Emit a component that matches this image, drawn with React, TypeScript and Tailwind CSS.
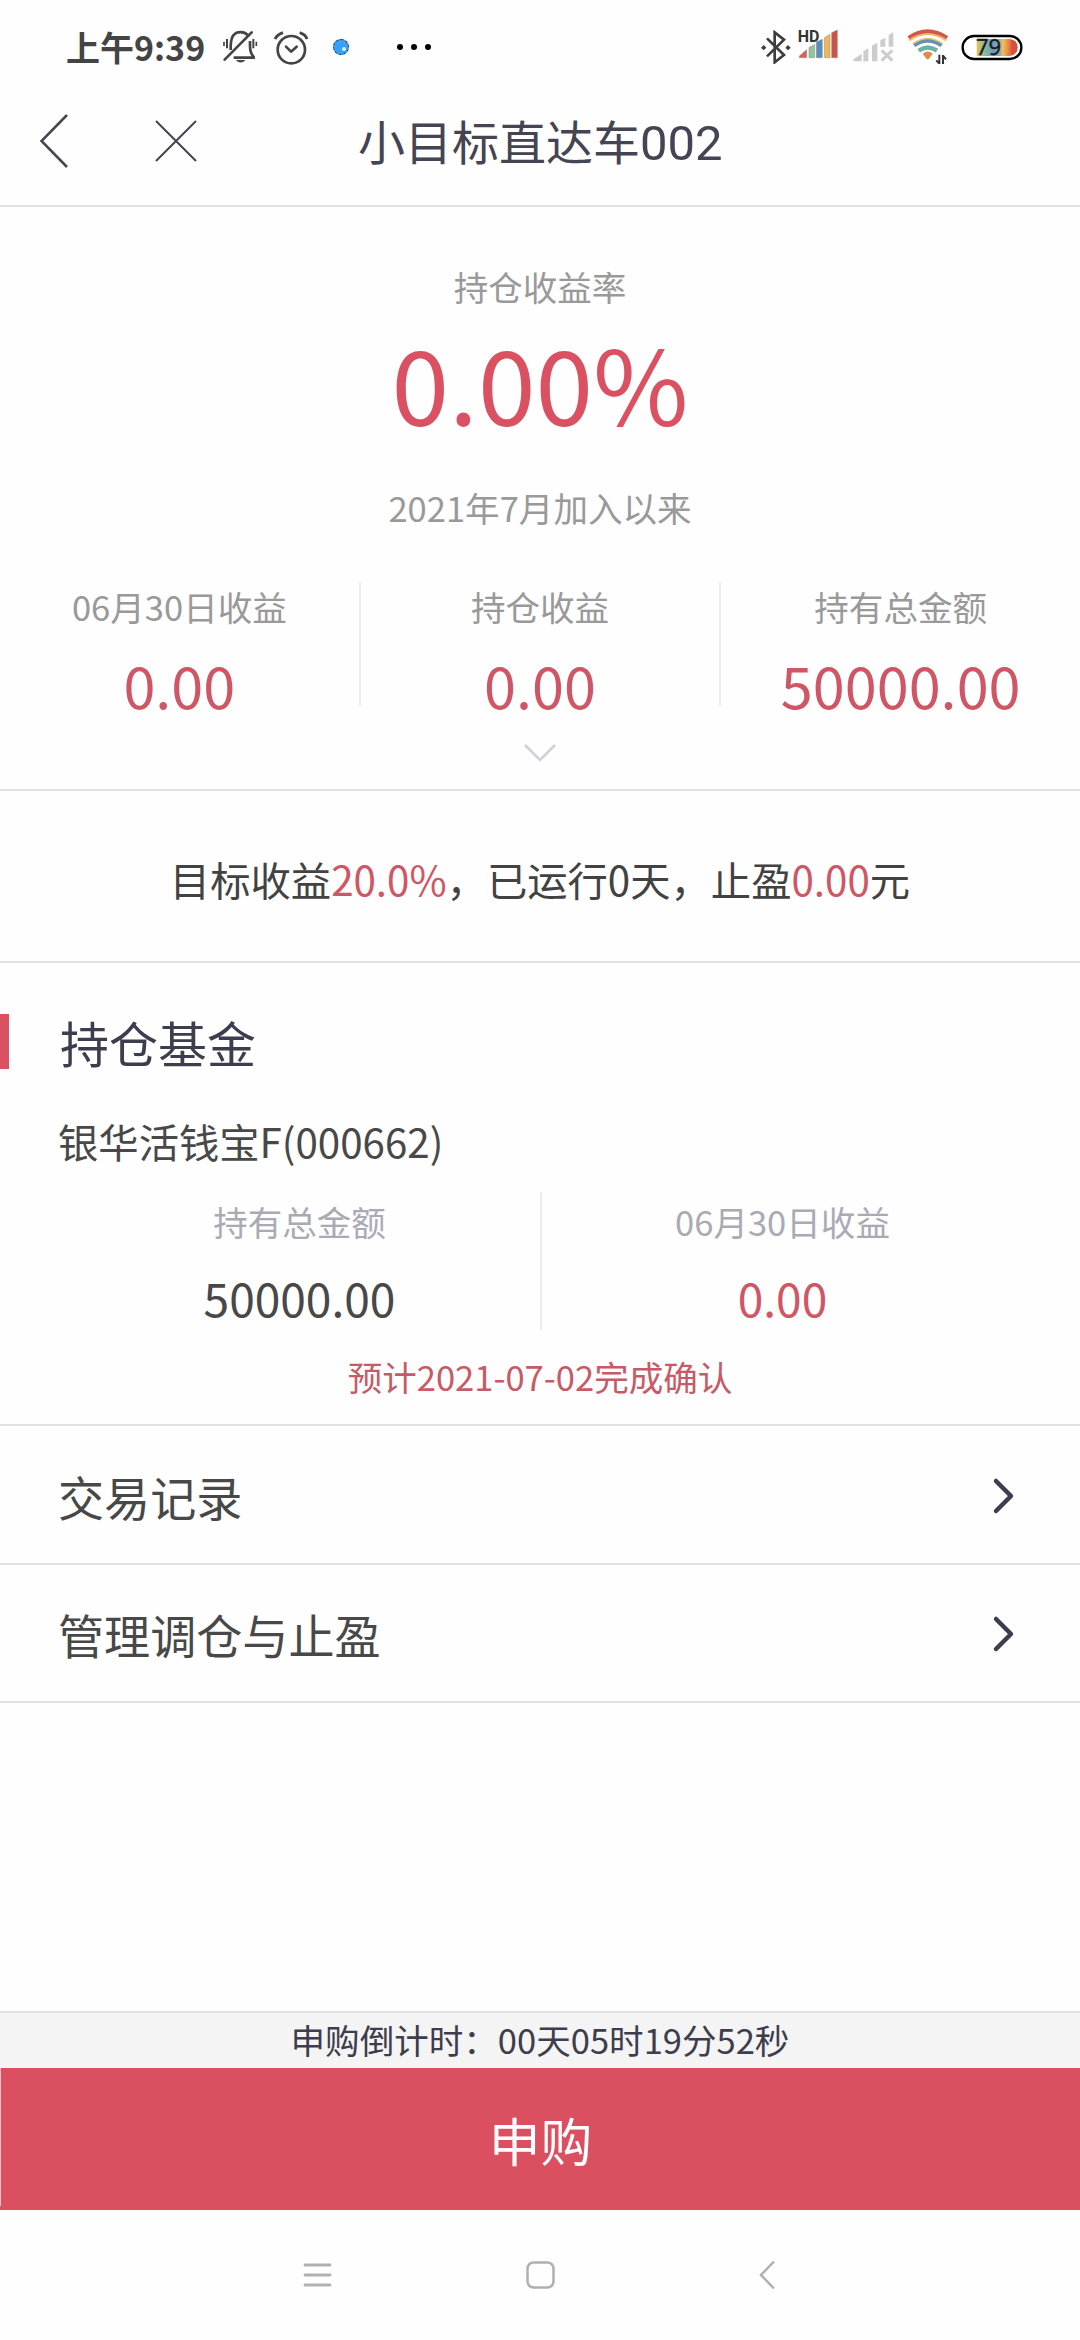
import type { ReactNode } from "react";
import { clsx } from "clsx";

type Stat = { label: string; value: string };

const stats: Stat[] = [
  { label: "06月30日收益", value: "0.00" },
  { label: "持仓收益", value: "0.00" },
  { label: "持有总金额", value: "50000.00" },
];

const links = ["交易记录", "管理调仓与止盈"];

function BellOff() {
  return (
    <svg className="h-[34px] w-[35px]" viewBox="548 60 105 102" fill="none" stroke="#444" strokeWidth="8">
      <path d="M622 75C612 64 590 63 580 75C572 84 572 92 571 108V120" />
      <path d="M629 93V108C629 124 632 132 640 141V143H580" />
      <path d="M634 67L553 149" strokeLinecap="round" />
      <path d="M587 150H615C610 160 592 160 587 150Z" fill="#444" stroke="none" />
      <path d="M560 87V115M639 87V115" strokeWidth="6" />
      <path d="M551 95V108M648 95V108" strokeWidth="5" />
    </svg>
  );
}

function Alarm() {
  return (
    <svg className="h-[35px] w-[36px]" viewBox="698 58 108 105" fill="none" stroke="#444" strokeWidth="8">
      <circle cx="753" cy="117" r="41" />
      <path d="M737 108L752 123L769 108" strokeLinecap="round" strokeLinejoin="round" />
      <path d="M704 85Q711 71 728 66M778 66Q795 71 800 85" strokeWidth="9" />
    </svg>
  );
}

function Bluetooth() {
  return (
    <svg className="h-[34px] w-[30px]" viewBox="64 59 90 102" fill="none" stroke="#3d3d3d" strokeWidth="8">
      <path d="M82 84L133 134L105 156V66L133 88L82 138" />
      <path d="M72 104L80 112L72 120L64 112ZM145 104L153 112L145 120L137 112Z" fill="#3d3d3d" stroke="none" />
    </svg>
  );
}

function HdSignal() {
  return (
    <svg className="h-[35px] w-[42px]" viewBox="171 42 126 105">
      <g stroke="#8a8a8a" strokeWidth="1.5">
        <path d="M178 143V138L200 119V143Z" fill="#d9644b" />
        <path d="M207 143V112L224 104V143Z" fill="#8fc79a" />
        <path d="M229 143V96L247 88V143Z" fill="#5b8dbb" />
        <path d="M253 143V83L270 73V143Z" fill="#f0b757" />
        <path d="M275 143V68L292 60V143Z" fill="#cf5245" />
      </g>
      <text x="173" y="97" fontSize="48" fontWeight="700" fill="#333" fontFamily="Roboto, sans-serif">
        HD
      </text>
    </svg>
  );
}

function NoSignal() {
  return (
    <svg className="h-[30px] w-[41px]" viewBox="341 65 123 90" fill="#ccc">
      <path d="M342 153V147L367 130V153Z" />
      <path d="M372 153V123L387 114V153Z" />
      <path d="M398 153V106L414 97V153Z" />
      <path d="M423 109V90L438 82V109Z" />
      <path d="M448 109V74L462 66V109Z" />
      <path d="M427 120L459 151M459 120L427 151" stroke="#ccc" strokeWidth="9" />
    </svg>
  );
}

function Wifi() {
  return (
    <svg className="h-[36px] w-[42px]" viewBox="504 58 126 108" fill="none">
      <path d="M509 85Q566 46 624 85" stroke="#cf5a49" strokeWidth="13" />
      <path d="M511 92Q566 54 622 92" stroke="#efb866" strokeWidth="6" />
      <path d="M525 107Q566 79 608 107" stroke="#668fb5" strokeWidth="12" />
      <path d="M523 101Q566 72 610 101" stroke="#efc873" strokeWidth="5" />
      <path d="M539 123Q566 104 594 123" stroke="#6fb0a8" strokeWidth="13" />
      <path d="M551 132Q566 119 581 132L570 147Q566 150 562 147Z" fill="#e08a4e" />
      <path d="M601 135V163M592 152L601 162M612 163V136M612 138L621 149" stroke="#333" strokeWidth="6" />
    </svg>
  );
}

function Battery() {
  return (
    <svg className="h-[41px] w-[62px]" viewBox="664 51 186 123">
      <defs>
        <linearGradient id="charge">
          <stop offset="0" stopColor="#e9bf58" />
          <stop offset="0.16" stopColor="#8fbf94" />
          <stop offset="0.4" stopColor="#6b98c4" />
          <stop offset="0.58" stopColor="#9fb39c" />
          <stop offset="0.64" stopColor="#f3c05a" />
          <stop offset="0.8" stopColor="#e87a42" />
          <stop offset="0.86" stopColor="#d5503f" />
          <stop offset="1" stopColor="#d5503f" />
        </linearGradient>
      </defs>
      <rect x="669" y="78" width="176" height="69" rx="34" fill="#fff" stroke="#000" strokeWidth="7" />
      <path d="M711 87H810Q834 90 834 112T810 138H711Z" fill="url(#charge)" />
      <text x="709" y="135" fontSize="66" fill="#1c1c1c" stroke="#1c1c1c" strokeWidth="1" fontFamily="'Noto Sans', sans-serif">
        79
      </text>
    </svg>
  );
}

function StatusBar() {
  return (
    <div className="flex h-[94px] items-center pl-[66px] pr-[57px]">
      <span className="w-[157px] whitespace-nowrap text-[34px] font-bold leading-[44px] text-[#444]">上午9:39</span>
      <BellOff />
      <span className="ml-[15px]">
        <Alarm />
      </span>
      <span className="ml-[24px] size-4 rounded-full border border-dashed border-[#235] bg-[#36a1f7]">
        <span className="ml-[8px] mt-[7px] block size-1 rounded-full bg-white/80" />
      </span>
      <span className="ml-[48px] flex gap-2">
        <i className="size-[6px] rounded-full bg-black" />
        <i className="size-[6px] rounded-full bg-black" />
        <i className="size-[6px] rounded-full bg-black" />
      </span>
      <div className="ml-auto flex items-center">
        <Bluetooth />
        <span className="mb-[11px] ml-[6px]">
          <HdSignal />
        </span>
        <span className="ml-[14px]">
          <NoSignal />
        </span>
        <span className="ml-[13px]">
          <Wifi />
        </span>
        <span className="ml-[12px]">
          <Battery />
        </span>
      </div>
    </div>
  );
}

function Header() {
  return (
    <header className="flex h-[113px] items-center border-b-2 border-[#e2e2e2] pb-[18px]">
      <svg className="ml-[36px] h-[56px] w-[36px]" viewBox="0 0 36 56" fill="none" stroke="#454552" strokeWidth="2.5">
        <path d="M31 2L5.500 28L31 54" />
      </svg>
      <svg className="ml-[82px] h-[44px] w-[44px]" viewBox="0 0 44 44" fill="none" stroke="#454552" strokeWidth="2">
        <path d="M2 2L42 42M42 2L2 42" />
      </svg>
      <h1 className="ml-[160px] mt-[2px] whitespace-nowrap text-[47px] leading-[60px] text-[#444452]">
        小目标直达车<span className="font-[Roboto] text-[49px]">002</span>
      </h1>
    </header>
  );
}

function FundColumn({ label, value, className }: Stat & { className?: string }) {
  return (
    <div className="flex flex-1 flex-col items-center">
      <span className="mt-[7px] text-[34.56px] leading-[44px] text-[#aaaab5]">{label}</span>
      <span className={clsx("mt-[29px] text-[46.08px] leading-[50px]", className)}>{value}</span>
    </div>
  );
}

function Red({ children }: { children: ReactNode }) {
  return <span className="text-[#cf5765]">{children}</span>;
}

export default function App() {
  return (
    <div className="flex h-[2340px] w-[1080px] flex-col overflow-hidden bg-[#fefefe] font-['Noto_Sans_CJK_SC',sans-serif] text-[#484848]">
      <StatusBar />
      <Header />

      <section className="flex h-[584px] flex-col items-center border-b-2 border-[#e2e2e2] text-[#999]">
        <span className="mt-[57px] text-[34.56px] leading-[44px]">持仓收益率</span>
        <span className="mt-[13px] text-[103.68px] leading-[120px] text-[#da5262]">0.00%</span>
        <span className="mt-[44px] text-[34.56px] leading-[44px]">2021年7月加入以来</span>
        <div className="mt-[53px] flex h-[124px] w-full">
          {stats.map((s, i) => (
            <div key={s.label} className={clsx("flex flex-1 flex-col items-center", i > 0 && "border-l-2 border-[#ececec]")}>
              <span className="mt-[2px] text-[34.56px] leading-[44px]">{s.label}</span>
              <span className="mt-[26px] text-[57.6px] leading-[60px] text-[#cf5765]">{s.value}</span>
            </div>
          ))}
        </div>
        <svg className="mt-[36px] h-[22px] w-[36px]" viewBox="0 0 36 22" fill="none" stroke="#cfd0de" strokeWidth="2.5">
          <path d="M3 3L18 18L33 3" />
        </svg>
      </section>

      <section className="flex h-[172px] items-center justify-center border-b-2 border-[#e2e2e2] pt-[5px] text-[40.32px] leading-[52px] text-[#424242]">
        <p>
          目标收益<Red>20.0%</Red>，已运行0天，止盈<Red>0.00</Red>元
        </p>
      </section>

      <section className="flex h-[463px] flex-col border-b-2 border-[#e2e2e2]">
        <div className="mt-[51px] flex h-[55px] items-center">
          <span className="h-full w-[9px] bg-[#da5262]" />
          <h2 className="ml-[51px] text-[49px] leading-[56px] text-[#3d3d4d]">持仓基金</h2>
        </div>
        <p className="ml-[58px] mt-[46px] text-[40.32px] leading-[52px]">银华活钱宝F(000662)</p>
        <div className="ml-[59px] mr-[57px] mt-[25px] flex h-[138px]">
          <FundColumn label="持有总金额" value="50000.00" />
          <span className="w-[2px] bg-[#ececec]" />
          <FundColumn label="06月30日收益" value="0.00" className="text-[#cf5765]" />
        </div>
        <p className="mt-[24px] text-center text-[34.56px] leading-[44px] text-[#c65a66]">预计2021-07-02完成确认</p>
      </section>

      {links.map((text) => (
        <a
          key={text}
          className="flex h-[138.5px] items-center justify-between border-b-2 border-[#e2e2e2] pl-[58px] pr-[62px] pt-[3px] text-[46.08px] leading-[60px]"
        >
          {text}
          <svg className="h-[40px] w-[28px]" viewBox="0 0 28 40" fill="none" stroke="#3d3d4d" strokeWidth="4.5">
            <path d="M6 5L21 20L6 35" strokeLinecap="round" strokeLinejoin="round" />
          </svg>
        </a>
      ))}

      <footer className="mt-auto">
        <div className="flex h-[57px] items-center justify-center border-t-2 border-[#e2e2e2] bg-[#f4f4f4] pb-[3px] text-[34.56px] leading-[44px] text-[#3d3d4d]">
          申购倒计时：00天05时19分52秒
        </div>
        <div className="h-[142px] bg-[#da5060]">
          <button className="flex h-[138px] w-full items-center justify-center border-l border-[#d8c4c8] pt-[6px] text-[51.84px] leading-[80px] text-white">
            申购
          </button>
        </div>
        <nav className="flex h-[130px] items-center pb-[1px] pl-[302px]">
          <svg className="h-[32px] w-[32px]" viewBox="0 0 32 32" stroke="#b0b0b0" strokeWidth="2.8" strokeLinecap="round">
            <path d="M3 6H28M3 16H28M3 26H28" />
          </svg>
          <svg className="ml-[190px] h-[32px] w-[32px]" viewBox="0 0 32 32" fill="none" stroke="#b0b0b0" strokeWidth="2.5">
            <rect x="3.500" y="3.500" width="26" height="25" rx="6" />
          </svg>
          <svg className="ml-[200px] h-[32px] w-[24px]" viewBox="0 0 24 32" fill="none" stroke="#b0b0b0" strokeWidth="2.5">
            <path d="M18 2.500L5 16L18 29.500" />
          </svg>
        </nav>
      </footer>
    </div>
  );
}
